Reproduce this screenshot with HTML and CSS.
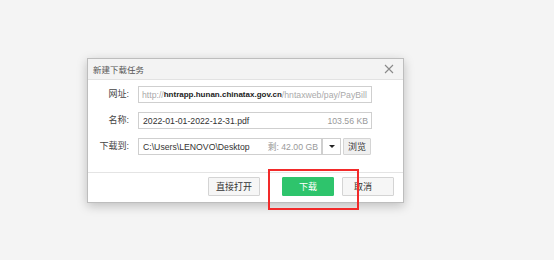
FILE: index.html
```html
<!DOCTYPE html>
<html lang="zh-CN">
<head>
    <meta charset="UTF-8">
    <title>新建下载任务</title>
    <link rel="stylesheet" href="styles.css">
</head>
<body>
    <div class="dialog">
        <div class="title-bar">
            <span class="title">新建下载任务</span>
            <svg class="close" width="10" height="10" viewBox="0 0 10 10">
                <path d="M1 1L9 9M9 1L1 9" stroke="#8a8a8a" stroke-width="1.1" fill="none"/>
            </svg>
        </div>
        <div class="form">
            <label class="label">网址:</label>
            <div class="field url">
                <span class="muted">http://</span><b class="host">hntrapp.hunan.chinatax.gov.cn</b><span class="muted">/hntaxweb/pay/PayBill</span>
            </div>

            <label class="label">名称:</label>
            <div class="field name">
                <span>2022-01-01-2022-12-31.pdf</span>
                <span class="muted size">103.56 KB</span>
            </div>

            <label class="label">下载到:</label>
            <div class="path-row">
                <div class="field path">
                    <span>C:\Users\LENOVO\Desktop</span>
                    <span class="muted size">剩: 42.00 GB</span>
                </div>
                <div class="dropdown"><span class="caret"></span></div>
                <button class="btn small">浏览</button>
            </div>
        </div>
        <div class="footer">
            <button class="btn">直接打开</button>
            <button class="btn primary">下载</button>
            <button class="btn cancel">取消</button>
        </div>
    </div>
    <div class="highlight"></div>
</body>
</html>
```

FILE: styles.css
```css
body {
    margin: 0;
    height: 260px;
    background: #f4f4f4;
    font-family: "Liberation Sans", "Noto Sans CJK SC", sans-serif;
    font-size: 9px;
    color: #333;
    position: relative;
    overflow: hidden;
}
.dialog {
    margin: 58px 0 0 87px;
    width: 315px;
    height: 143px;
    background: #fff;
    border: 1px solid #bdbdbd;
    box-shadow: 0 3px 10px rgba(0, 0, 0, 0.22);
    display: flex;
    flex-direction: column;
}
.title-bar {
    height: 20px;
    background: #f3f3f3;
    border-bottom: 1px solid #e2e2e2;
    display: flex;
    align-items: center;
    justify-content: space-between;
    padding: 0 9px 0 5px;
}
.title { color: #555; font-size: 8.5px; }
.close { display: block; }
.form {
    display: grid;
    grid-template-columns: 41px 234px;
    column-gap: 9px;
    row-gap: 9px;
    grid-auto-rows: 17px;
    padding: 6px 0 17px 0;
    border-bottom: 1px solid #e4e4e4;
}
.label {
    text-align: right;
    line-height: 17px;
    color: #444;
}
.field {
    box-sizing: border-box;
    height: 17px;
    border: 1px solid #cfcfcf;
    display: flex;
    align-items: center;
    justify-content: space-between;
    padding: 0 3px 0 4px;
    white-space: nowrap;
    overflow: hidden;
    color: #333;
    font-size: 8.7px;
}
.url { justify-content: flex-start; padding-left: 3px; }
.muted { color: #aaa; }
.host { color: #222; font-size: 8px; }
.size { color: #999; }
.path-row {
    display: flex;
    align-items: stretch;
    gap: 2px;
}
.path { width: 184px; flex: none; }
.dropdown {
    box-sizing: border-box;
    width: 19px;
    height: 17px;
    margin-left: -2px;
    border: 1px solid #cfcfcf;
    display: flex;
    align-items: center;
    justify-content: center;
}
.caret {
    width: 0;
    height: 0;
    border-left: 3px solid transparent;
    border-right: 3px solid transparent;
    border-top: 3px solid #222;
}
.btn {
    box-sizing: border-box;
    width: 52px;
    height: 19px;
    padding: 0;
    font: inherit;
    color: #333;
    background: #f6f6f6;
    border: 1px solid #d4d4d4;
    border-radius: 1px;
}
.btn.small { width: 28px; height: 17px; background: #f0f0f0; }
.btn.primary {
    background: #2ec46c;
    border-color: #2ec46c;
    color: #fff;
}
.btn.cancel { padding-right: 10px; }
.footer {
    display: flex;
    justify-content: flex-end;
    gap: 8px;
    padding: 4px 9px 0 0;
}
.footer .btn:first-child { margin-right: 14px; }
.highlight {
    position: absolute;
    left: 268px;
    top: 169px;
    width: 87px;
    height: 37px;
    border: 2px solid #f22a2a;
}
```
